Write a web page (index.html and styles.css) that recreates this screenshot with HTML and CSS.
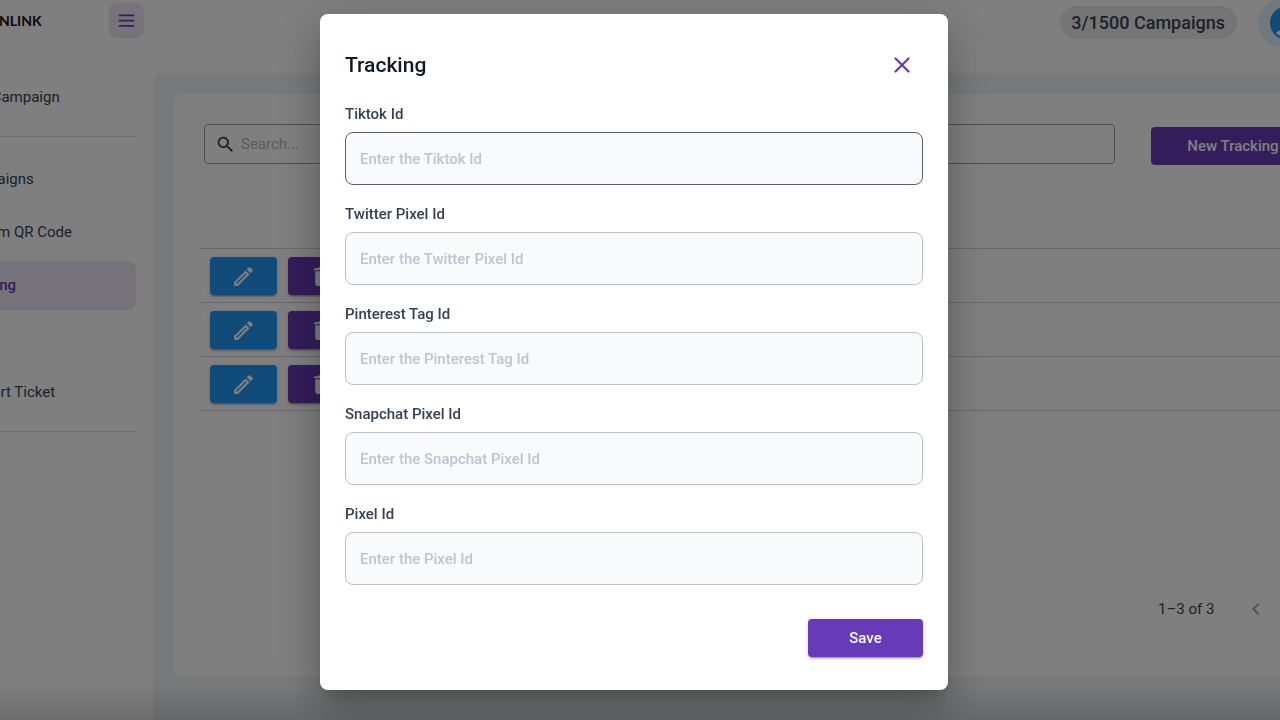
FILE: index.html
```html
<!DOCTYPE html>
<html lang="en">
<head>
<meta charset="utf-8">
<meta name="viewport" content="width=device-width, initial-scale=1">
<title>Tracking</title>
<link rel="stylesheet" href="styles.css">
</head>
<body>
<svg class="sprite" aria-hidden="true">
  <symbol id="i-edit" viewBox="0 0 24 24"><path d="M14.06 9.02l.92.92L5.92 19H5v-.92l9.06-9.06M17.66 3c-.25 0-.51.1-.7.29l-1.83 1.83 3.75 3.75 1.83-1.83c.39-.39.39-1.02 0-1.41l-2.34-2.34c-.2-.2-.45-.29-.71-.29zm-3.6 3.19L3 17.25V21h3.75L17.81 9.94l-3.75-3.75z"/></symbol>
  <symbol id="i-trash" viewBox="0 0 24 24"><path d="M6 19c0 1.100.9 2 2 2h8c1.100 0 2-.9 2-2V7H6v12zM19 4h-3.500l-1-1h-5l-1 1H5v2h14V4z"/></symbol>
</svg>
<div class="shell">
  <header class="topbar">
    <div class="brand">
      <span class="brand-name">NLINK</span>
      <button class="menu-btn" type="button" aria-label="Menu">
        <svg viewBox="0 0 24 24" width="21" height="21"><path d="M4 6h16M4 12h16M4 18h16"/></svg>
      </button>
    </div>
    <div class="topbar-end">
      <span class="quota">3/1500 Campaigns</span>
      <button class="profile" type="button" aria-label="Profile">
        <svg viewBox="0 0 34 34" width="34" height="34"><circle cx="17" cy="17" r="17" fill="#2196f3"/><path d="M6 27l4-3 3 3-3 3z" fill="#fff"/></svg>
      </button>
    </div>
  </header>
  <div class="columns">
    <nav class="sidebar">
      <a class="nav-item" href="#">New Campaign</a>
      <hr class="nav-rule">
      <a class="nav-item" href="#">Campaigns</a>
      <a class="nav-item" href="#">Custom QR Code</a>
      <a class="nav-item active" href="#">Tracking</a>
      <a class="nav-item after-group" href="#">Support Ticket</a>
      <hr class="nav-rule">
    </nav>
    <main class="content">
      <section class="card">
        <div class="toolbar">
          <label class="search">
            <svg viewBox="0 0 24 24" width="21" height="21" aria-hidden="true"><path d="M15.500 14h-.79l-.28-.27C15.410 12.590 16 11.110 16 9.500 16 5.910 13.090 3 9.500 3S3 5.910 3 9.500 5.910 16 9.500 16c1.610 0 3.090-.59 4.230-1.570l.27.28v.79l5 4.990L20.490 19l-4.990-5zm-6 0C7.010 14 5 11.990 5 9.500S7.010 5 9.500 5 14 7.010 14 9.500 11.990 14 9.500 14z"/></svg>
            <input class="search-input" type="text" placeholder="Search..." aria-label="Search">
          </label>
          <button class="btn new-btn" type="button">New Tracking</button>
        </div>
        <table class="grid">
          <thead><tr><td></td></tr></thead>
          <tbody>
            <tr><td><div class="actions"><button class="btn edit" type="button" aria-label="Edit"><svg class="icon"><use href="#i-edit"/></svg></button><button class="btn" type="button" aria-label="Delete"><svg class="icon"><use href="#i-trash"/></svg></button></div></td></tr>
            <tr><td><div class="actions"><button class="btn edit" type="button" aria-label="Edit"><svg class="icon"><use href="#i-edit"/></svg></button><button class="btn" type="button" aria-label="Delete"><svg class="icon"><use href="#i-trash"/></svg></button></div></td></tr>
            <tr><td><div class="actions"><button class="btn edit" type="button" aria-label="Edit"><svg class="icon"><use href="#i-edit"/></svg></button><button class="btn" type="button" aria-label="Delete"><svg class="icon"><use href="#i-trash"/></svg></button></div></td></tr>
          </tbody>
        </table>
        <div class="pager">
          <span>1–3 of 3</span>
          <button class="pager-btn" type="button" aria-label="Previous page">
            <svg viewBox="0 0 24 24" width="24" height="24"><path d="M15.410 7.410 14 6l-6 6 6 6 1.410-1.410L10.830 12z"/></svg>
          </button>
        </div>
      </section>
    </main>
  </div>
</div>
<div class="backdrop">
  <form class="dialog" role="dialog" aria-modal="true" aria-labelledby="dialog-title">
    <div class="dialog-head">
      <h2 class="dialog-title" id="dialog-title">Tracking</h2>
      <button class="close" type="button" aria-label="Close">
        <svg viewBox="0 0 24 24" width="26" height="26"><path d="M18 6 6 18M6 6l12 12"/></svg>
      </button>
    </div>
    <div class="fields">
      <div class="field"><label for="tiktok">Tiktok Id</label><input class="current" id="tiktok" type="text" placeholder="Enter the Tiktok Id"></div>
      <div class="field"><label for="twitter">Twitter Pixel Id</label><input id="twitter" type="text" placeholder="Enter the Twitter Pixel Id"></div>
      <div class="field"><label for="pinterest">Pinterest Tag Id</label><input id="pinterest" type="text" placeholder="Enter the Pinterest Tag Id"></div>
      <div class="field"><label for="snapchat">Snapchat Pixel Id</label><input id="snapchat" type="text" placeholder="Enter the Snapchat Pixel Id"></div>
      <div class="field"><label for="pixel">Pixel Id</label><input id="pixel" type="text" placeholder="Enter the Pixel Id"></div>
    </div>
    <div class="dialog-foot">
      <button class="btn save" type="submit">Save</button>
    </div>
  </form>
</div>
</body>
</html>
```
FILE: styles.css
```css
*, *::before, *::after { box-sizing: border-box; }

body {
  margin: 0;
  overflow: hidden;
  background: #fff;
  color: #364152;
  font-family: Roboto, sans-serif;
  font-size: 15px;
  line-height: 18px;
}

button, input { font: inherit; }

button {
  display: flex;
  align-items: center;
  justify-content: center;
  padding: 0;
  border: 0;
  cursor: pointer;
}

.sprite { display: none; }

/* The shell is wider than the window on both sides. */
.shell {
  display: flex;
  flex-direction: column;
  min-height: 100vh;
  margin: 0 -85px 0 -124px;
}

.topbar {
  display: flex;
  justify-content: space-between;
  height: 73px;
  padding-right: 20px;
}

.brand {
  display: flex;
  align-items: center;
  justify-content: space-between;
  width: 268px;
  height: 41px;
  padding-left: 123px;
}

.brand-name {
  color: #111;
  font-family: Lato, sans-serif;
  font-size: 14px;
  line-height: 20px;
  font-weight: 700;
}

.menu-btn {
  width: 35px;
  height: 35px;
  border-radius: 8px;
  background: #ede7f6;
}

.menu-btn path, .close path {
  fill: none;
  stroke: #673ab7;
  stroke-width: 2;
  stroke-linecap: round;
}

.topbar-end {
  display: flex;
  align-items: center;
  gap: 21px;
  height: 45px;
}

.quota {
  padding: 6px 12px 6px 11px;
  border-radius: 17px;
  background: #ebebeb;
  font-size: 18px;
  line-height: 21px;
  font-weight: 500;
}

.profile {
  justify-content: flex-start;
  width: 87px;
  height: 50px;
  padding-left: 12px;
  border-radius: 25px;
  background: #e3f2fd;
}

.columns { display: flex; flex: 1; }

.sidebar {
  display: flex;
  flex-direction: column;
  gap: 4px;
  width: 277px;
  padding: 0 17px 0 16px;
}

.nav-item {
  padding: 15px 16px 15px 66px;
  border-radius: 8px;
  color: #364152;
  line-height: 19px;
  text-decoration: none;
}

.nav-item.active {
  background: #ede7f6;
  color: #673ab7;
  font-weight: 500;
}

.nav-item.after-group { margin-top: 54px; }

.nav-rule {
  width: 100%;
  margin: 10px 0 14px;
  border: 0;
  border-top: 1px solid #e0e3e8;
}

.content {
  display: flex;
  flex: 1;
  padding: 21px 20px 43px 21px;
  border-radius: 8px 8px 0 0;
  background: #eef2f6;
}

.card {
  display: flex;
  flex: 1;
  flex-direction: column;
  padding: 30px 30px 48px 26px;
  border-radius: 8px;
  background: #fff;
}

.toolbar {
  display: flex;
  align-items: flex-end;
  gap: 36px;
  height: 41px;
  padding-left: 4px;
}

.search {
  display: flex;
  flex: 1;
  align-self: flex-start;
  align-items: center;
  gap: 5px;
  height: 40px;
  padding: 0 10px;
  border: 1px solid #9a9da4;
  border-radius: 4px;
}

.search svg { fill: #364152; }

.search-input {
  flex: 1;
  min-width: 0;
  padding: 0;
  border: 0;
  outline: 0;
  background: none;
}

.search-input::placeholder { color: #b4b7bd; opacity: 1; }

.btn {
  width: 67px;
  height: 38px;
  border-radius: 4px;
  background: #673ab7;
  box-shadow: 0 3px 1px -2px rgba(0, 0, 0, .2), 0 2px 2px rgba(0, 0, 0, .14), 0 1px 5px rgba(0, 0, 0, .12);
  color: #fff;
  font-weight: 500;
}

.btn.edit { background: #2196f3; }
.btn.new-btn { width: 164px; box-shadow: none; }
.btn.save { width: 115px; }

.icon { width: 25px; height: 25px; fill: #fff; }

.grid {
  width: 100%;
  border-collapse: collapse;
}

.grid td {
  height: 54px;
  padding: 2px 10px 0;
  border-bottom: 1px solid #d0d0d4;
}

.grid thead td { height: 83px; }

.actions { display: flex; gap: 11px; }

.pager {
  display: flex;
  align-items: center;
  gap: 30px;
  width: 157px;
  height: 40px;
  margin: auto 0 0 auto;
  white-space: nowrap;
}

.pager-btn { background: none; }
.pager-btn svg { fill: #a8a8a8; }

.backdrop {
  position: fixed;
  inset: 0;
  display: flex;
  align-items: center;
  justify-content: center;
  padding: 0 12px 16px 0;
  background:
    linear-gradient(transparent calc(100% - 36px), rgba(0, 0, 0, .14)),
    rgba(0, 0, 0, .5);
}

.dialog {
  width: 628px;
  max-width: 100%;
  padding: 34px 25px 33px;
  border-radius: 8px;
  background: #fff;
  box-shadow: 0 11px 15px -7px rgba(0, 0, 0, .2), 0 24px 38px 3px rgba(0, 0, 0, .14), 0 9px 46px 8px rgba(0, 0, 0, .12);
}

.dialog-head {
  display: flex;
  align-items: center;
  justify-content: space-between;
  height: 33px;
  padding-right: 8px;
}

.dialog-title {
  margin: 0;
  color: #121926;
  font-size: 21px;
  line-height: 32px;
  font-weight: 500;
}

.close { background: none; }

.fields {
  display: flex;
  flex-direction: column;
  gap: 20px;
  margin-top: 24px;
}

.field {
  display: flex;
  flex-direction: column;
  gap: 9px;
}

.field label { font-weight: 500; }

.field input {
  height: 53px;
  padding: 0 14px;
  border: 1px solid #bfc1c4;
  border-radius: 8px;
  outline: 0;
  background: #f8fafc;
  color: #121926;
  font-weight: 500;
}

.field input.current { border-color: #566070; }
.field input::placeholder { color: #bfc4cd; opacity: 1; }

.dialog-foot {
  display: flex;
  justify-content: flex-end;
  margin-top: 34px;
}
```
